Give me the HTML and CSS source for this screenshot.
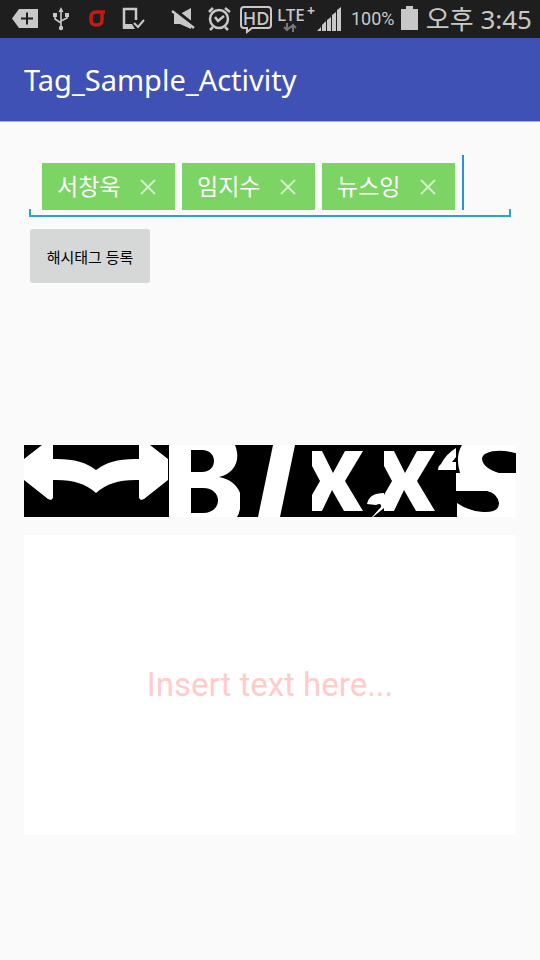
FILE: index.html
```html
<!DOCTYPE html>
<html lang="ko">
<head>
<meta charset="utf-8">
<meta name="viewport" content="width=device-width, initial-scale=1">
<title>Tag_Sample_Activity</title>
<link rel="stylesheet" href="styles.css">
</head>
<body>
<div class="status">
  <svg class="status-icons" viewBox="0 0 150 38" width="150" height="38" aria-hidden="true">
    <path fill="#c8c8c8" d="M19 9H38V28H19L12 18.500Z"/>
    <path stroke="#1e1e1e" stroke-width="2" d="M21 18.500H33M27 12.500V24.500"/>
    <g fill="none" stroke="#c8c8c8" stroke-width="1.600"><path d="M61 10V28M55 15V19L61 23M67 14V18L61 21"/></g>
    <path fill="#c8c8c8" d="M61 7L58.500 12H63.500ZM53 13H57V17H53ZM65 13H69V17H65Z"/><circle cx="61" cy="28" r="2.200" fill="#c8c8c8"/>
    <path d="M105 12H97Q91 12 91 17V20Q91 25 96 25H97Q102 25 102 20V14" fill="none" stroke="#c51b12" stroke-width="3.500"/>
    <path d="M132 27H124V9H136V20" fill="none" stroke="#c8c8c8" stroke-width="2.500"/><path d="M123 24H132L135 29H123Z" fill="#c8c8c8"/>
    <path d="M134 23L138 27L144 20" fill="none" stroke="#c8c8c8" stroke-width="2"/>
  </svg>
  <svg class="status-icons" viewBox="168 0 68 38" width="68" height="38" aria-hidden="true">
    <path fill="#c8c8c8" d="M174 14H180L191 8V29L180 24H174Z"/><path d="M172 8L196 27" stroke="#1e1e1e" stroke-width="4"/><path d="M172 11L194 28" stroke="#c8c8c8" stroke-width="2.500"/>
    <g fill="none" stroke="#c8c8c8" stroke-width="2.500"><circle cx="219" cy="19" r="9"/><path d="M215 17L218 21L224 16M209 12L213 8M225 8L230 12M213 27L210 30M225 27L228 30"/></g>
  </svg>
  <span class="hd"><svg viewBox="0 0 32 28" width="32" height="28" aria-hidden="true"><path d="M4 1H28Q31 1 31 4V19Q31 22 28 22H12L7 26V22H4Q1 22 1 19V4Q1 1 4 1Z"/></svg><span>HD</span></span>
  <span class="lte">LTE<sup>+</sup>
    <svg viewBox="0 0 14 9" width="14" height="9" aria-hidden="true"><path d="M4 0V7M1 4L4 7L7 4M10 9V2M7 5L10 2L13 5" fill="none" stroke="#777" stroke-width="2"/></svg>
  </span>
  <svg class="signal" viewBox="0 0 25 38" width="25" height="38" aria-hidden="true"><path fill="#c8c8c8" d="M0 31L4 27V31ZM5 31V25L9 21V31ZM10 31V20L14 17V31ZM15 31V15L19 12V31ZM20 31V10L24 7V31Z"/></svg>
  <span class="percent">100%</span>
  <svg class="battery" viewBox="0 0 17 38" width="17" height="38" aria-hidden="true"><path fill="#c8c8c8" d="M0 9H5V6H12V9H17V30H0Z"/></svg>
  <time class="clock">오후 3:45</time>
</div>
<header class="appbar"><h1>Tag_Sample_Activity</h1></header>
<main class="content">
  <div class="tag-field">
    <span class="tag"><span>서창욱</span><button class="remove" type="button" aria-label="서창욱"><svg viewBox="0 0 16 16" width="16" height="16"><path d="M1 1L15 15M15 1L1 15"/></svg></button></span>
    <span class="tag"><span>임지수</span><button class="remove" type="button" aria-label="임지수"><svg viewBox="0 0 16 16" width="16" height="16"><path d="M1 1L15 15M15 1L1 15"/></svg></button></span>
    <span class="tag"><span>뉴스잉</span><button class="remove" type="button" aria-label="뉴스잉"><svg viewBox="0 0 16 16" width="16" height="16"><path d="M1 1L15 15M15 1L1 15"/></svg></button></span>
    <span class="caret"></span>
    <input class="tag-input" type="text" aria-label="해시태그">
  </div>
  <button class="submit" type="button">해시태그 등록</button>
  <div class="toolbar" role="toolbar">
    <button type="button" aria-label="Undo"><svg viewBox="0 0 72 72"><path d="M0 14L18 0H29V14Q57 13 72 25V48Q57 34 29 35V53L27 55L24 54L0 35Z"/></svg></button>
    <button type="button" aria-label="Redo"><svg viewBox="0 0 72 72"><path d="M72 14L54 0H43V14Q15 13 0 25V48Q15 34 43 35V53L45 55L48 54L72 35Z"/></svg></button>
    <button type="button" aria-label="Bold"><svg viewBox="0 0 72 72"><path fill-rule="evenodd" d="M1 0H67C73 15 67 28 51 32C62 34 69 40 72 48V64Q71 69 69 72H1ZM23 5V27H34C50 27 50 5 34 5ZM23 43V68H35C55 68 55 43 35 43Z"/></svg></button>
    <button type="button" aria-label="Italic"><svg viewBox="0 0 72 72"><path d="M33 0H55L40 72H18Z"/></svg></button>
    <button type="button" aria-label="Subscript"><svg viewBox="0 0 72 72"><path d="M0 6H10L21 28L33 6H51L33 36L51 66H32L20 45L10 66H0V50L8 36L0 21ZM55 59Q57 48 72 48V63L61 72H60L69 62Q70 57 64 60Z"/></svg></button>
    <button type="button" aria-label="Superscript"><svg viewBox="0 0 72 72"><path d="M0 6H10L21 28L33 6H51L33 36L51 66H32L20 45L10 66H0V50L8 36L0 21ZM54 25Q54 21 57 19Q62 9 72 3V12L68 17H72V25Z"/></svg></button>
    <button type="button" aria-label="Strikethrough"><svg viewBox="0 0 72 72"><path fill-rule="evenodd" d="M6 0H72V72H1V58Q12 66 27 67Q43 68 43 58Q41 48 31 46H0V28H4Q-1 11 6 0ZM72 14C54 2 26 4 26 14Q27 23 43 28H72Z"/></svg></button>
  </div>
  <textarea class="editor" aria-label="Editor" placeholder="Insert text here..."></textarea>
</main>
</body>
</html>
```
FILE: styles.css
```css
* { box-sizing: border-box; }
body {
  margin: 0;
  background: #fafafa;
  color: #000;
  font-family: "Noto Sans", "Noto Sans CJK KR", sans-serif;
}
button { border: 0; padding: 0; font: inherit; }
svg { display: block; flex: none; }
.status {
  display: flex;
  align-items: center;
  height: 38px;
  padding-right: 8px;
  overflow: hidden;
  background: #1e1e1e;
  color: #c8c8c8;
  white-space: nowrap;
}
.status-icons + .status-icons { margin-left: 18px; }
.hd {
  display: grid;
  width: 32px;
  height: 26px;
  margin-left: 4px;
  font: 500 18px/24px "Noto Sans", sans-serif;
  text-align: center;
}
.hd > * { grid-area: 1 / 1; }
.hd path { fill: none; stroke: #c8c8c8; stroke-width: 2; }
.lte {
  position: relative;
  width: 38px;
  height: 26px;
  margin-left: 5px;
  font: 500 17px/18px "Noto Sans", sans-serif;
}
.lte sup {
  position: absolute;
  top: -4px;
  right: 0;
  font-size: 14px;
  font-weight: 700;
  line-height: 18px;
}
.lte svg { position: absolute; left: 6px; bottom: 0; }
.signal { margin-left: 2px; }
.percent {
  width: 46px;
  margin-left: 9px;
  font: 18px/38px Roboto, sans-serif;
}
.battery { margin-left: 4px; }
.clock {
  margin-left: auto;
  font: 26px/34px "Noto Sans", "Noto Sans CJK KR", sans-serif;
}
.appbar {
  display: flex;
  align-items: center;
  height: 84px;
  padding: 0 24px;
  border-bottom: 1px solid #a2abdc;
  background: #3f51b5;
  color: #fff;
}
h1 { margin: 0; font-size: 29px; line-height: 40px; font-weight: 400; }
.content { padding: 33px 24px 24px; }
.tag-field {
  position: relative;
  display: flex;
  align-items: flex-end;
  gap: 7px;
  height: 62px;
  margin: 0 5px;
  padding: 0 13px 7px;
}
.tag-field::after {
  content: "";
  position: absolute;
  inset: auto 0 0;
  height: 6px;
  border: 2px solid #2ba3cb;
  border-top: 0;
}
.tag {
  display: flex;
  align-items: center;
  justify-content: space-between;
  flex: none;
  width: 133px;
  height: 47px;
  padding: 0 19px 0 15px;
  background: #7bd463;
  color: #fff;
  font-size: 23px;
  line-height: 32px;
}
.tag > span { padding-bottom: 2px; }
.remove { background: none; }
.remove path { fill: none; stroke: #d2f1c9; stroke-width: 2; }
.caret { flex: none; width: 2px; height: 55px; background: #2b90e0; }
.tag-input {
  flex: 1;
  min-width: 0;
  height: 47px;
  border: 0;
  padding: 0;
  outline: 0;
  background: transparent;
  font: inherit;
}
.submit {
  display: block;
  width: 120px;
  height: 54px;
  margin: 12px 6px 0;
  border-radius: 3px;
  background: #d6d7d7;
  color: #000;
  font-size: 15px;
}
.toolbar {
  display: flex;
  height: 72px;
  margin-top: 162px;
  overflow: hidden;
  background: #000;
}
.toolbar button { flex: none; width: 72px; height: 72px; background: #000; }
.toolbar svg { width: 72px; height: 72px; fill: #fff; }
.editor {
  display: block;
  width: 100%;
  height: 300px;
  margin-top: 18px;
  padding: 126px 0;
  border: 0;
  outline: 0;
  resize: none;
  background: #fff;
  font: 33px/48px Roboto, sans-serif;
  text-align: center;
}
.editor::placeholder { color: #ffcccb; opacity: 1; }
```
